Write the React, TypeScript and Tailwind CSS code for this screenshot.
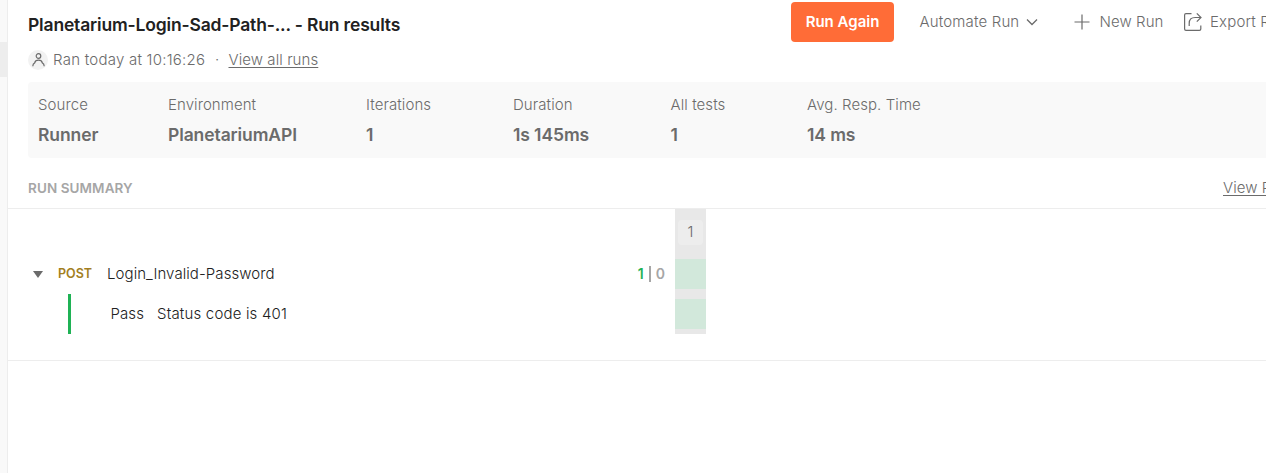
import React from "react";

const stats = [
  { label: "Source", value: "Runner", width: "w-[130px]" },
  { label: "Environment", value: "PlanetariumAPI", width: "w-[198px]" },
  { label: "Iterations", value: "1", width: "w-[147px]" },
  { label: "Duration", value: "1s 145ms", width: "w-[157.5px]" },
  { label: "All tests", value: "1", width: "w-[136.5px]" },
  { label: "Avg. Resp. Time", value: "14 ms", width: "w-[160px]" },
];

function Header() {
  return (
    <header className="flex h-[82px] shrink-0 pl-5">
      <div className="w-[763px] shrink-0">
        <h1 className="mt-[13px] h-6 text-[17.5px] leading-6 font-semibold tracking-[-0.17px] text-[#212121]">
          Planetarium-Login-Sad-Path-... - Run results
        </h1>
        <div className="mt-[11px] flex h-6 items-center">
          <span className="flex size-5 items-center justify-center rounded-full bg-[#f2f2f2]">
            <svg width="14" height="16" viewBox="0 0 14 16" fill="none" stroke="#6b6b6b" strokeWidth="1.2">
              <circle cx="7.500" cy="4" r="2.300" />
              <path d="M1.800 14.300c0-2 .6-2.900 1.900-3.400C4 9.300 5.500 8.200 7.500 8.200s3.500 1.100 3.800 2.700c1.300.5 1.900 1.400 1.900 3.400" />
            </svg>
          </span>
          <span className="ml-[5px] w-[153px] tracking-[0.24px]">Ran today at 10:16:26</span>
          <span className="w-[22.5px] text-center">·</span>
          <a className="underline underline-offset-2">View all runs</a>
        </div>
      </div>
      <div className="mt-0.5 flex h-10 shrink-0 items-center">
        <button className="h-10 w-[103px] rounded bg-[#ff6c37] font-semibold tracking-normal text-white">Run Again</button>
        <span className="ml-[25.500px] w-[100.5px] tracking-[0.16px]">Automate Run</span>
        <svg className="ml-1.5" width="12" height="12" viewBox="0 0 12 12" fill="none" stroke="#6b6b6b" strokeWidth="1.3">
          <path d="M1 3.500l5 5 5-5" />
        </svg>
        <svg className="ml-9" width="16" height="16" viewBox="0 0 16 16" fill="none" stroke="#6b6b6b" strokeWidth="1.2">
          <path d="M8 0.500v15M0.500 8h15" />
        </svg>
        <span className="ml-[9.500px] w-[63.5px]">New Run</span>
        <svg className="ml-5" width="20" height="20" viewBox="0 0 20 20" fill="none" stroke="#6b6b6b" strokeWidth="1.2">
          <path d="M8.500 1.600H3Q1.600 1.600 1.600 3v14q0 1.400 1.400 1.400h13.400q1.400 0 1.400-1.400V13.500" />
          <path d="M6.200 14V11.500Q6.200 5.500 12.200 5.500H17.500M13.800 1.300l4.200 4.200-4.200 4.200" />
        </svg>
        <span className="ml-[7px] tracking-[0.16px]">Export Results</span>
      </div>
    </header>
  );
}

function Stats() {
  return (
    <section className="ml-5 flex h-[76px] shrink-0 rounded-l bg-[#f9f9f9] pl-2.5">
      {stats.map((s) => (
        <div key={s.label} className={`${s.width} shrink-0 pt-[11px]`}>
          <div className="h-6 leading-6">{s.label}</div>
          <div className="mt-[6px] h-6 text-[17.5px] leading-6 font-semibold tracking-[-0.1px]">{s.value}</div>
        </div>
      ))}
    </section>
  );
}

function Results() {
  return (
    <section className="flex h-[152px] shrink-0 border-b border-[#ededed] text-[#212121]">
      <div className="w-[667px] shrink-0 pt-[45px]">
        <div className="flex h-10 items-center pl-[25px]">
          <svg width="10" height="7" viewBox="0 0 10 7" fill="#6b6b6b">
            <path d="M0 0h10L5 7z" />
          </svg>
          <span className="ml-[15px] w-[49px] text-[12.500px] font-semibold tracking-normal text-[#a37f1f]">POST</span>
          <span>Login_Invalid-Password</span>
          <span className="mr-2.5 ml-auto flex items-center pb-px text-[14px] font-semibold">
            <span className="text-[#1fb255]">1</span>
            <span className="mr-[5px] ml-[5px] h-4 w-0.5 bg-[#a6a6a6]" />
            <span className="text-[#a6a6a6]">0</span>
          </span>
        </div>
        <div className="ml-[60px] flex h-10 items-center border-l-3 border-[#1fb255] pl-[39.500px]">
          <span className="w-[46.5px]">Pass</span>
          <span className="tracking-[0.18px]">Status code is 401</span>
        </div>
      </div>
      <div className="h-[125px] w-[31px] bg-[#e8e8e8]">
        <div className="flex h-[50px] items-center justify-center pb-1">
          <span className="flex size-[25px] items-center justify-center rounded-sm bg-[#ededed] text-[#6b6b6b]">1</span>
        </div>
        <div className="h-[30px] bg-[#d2e8db]" />
        <div className="mt-2.5 h-[30px] bg-[#d2e8db]" />
      </div>
    </section>
  );
}

export default function App() {
  return (
    <div className="flex h-[473px] w-full overflow-hidden bg-white font-['Inter',sans-serif] text-[15px] font-[350] tracking-[0.08px] whitespace-nowrap text-[#6b6b6b]">
      <aside className="w-2 shrink-0 border-r border-[#ededed] bg-[#f9f9f9] pt-[42px]">
        <div className="h-[35px] bg-[#ededed]" />
      </aside>
      <main className="flex min-w-0 flex-1 flex-col overflow-hidden">
        <Header />
        <Stats />
        <div className="flex h-[51px] shrink-0 items-center border-b border-[#ededed] pt-[10px] pl-5">
          <h2 className="w-[1195px] shrink-0 text-[13.500px] font-semibold text-[#a6a6a6]">RUN SUMMARY</h2>
          <a className="underline underline-offset-2">View Results</a>
        </div>
        <Results />
      </main>
    </div>
  );
}
